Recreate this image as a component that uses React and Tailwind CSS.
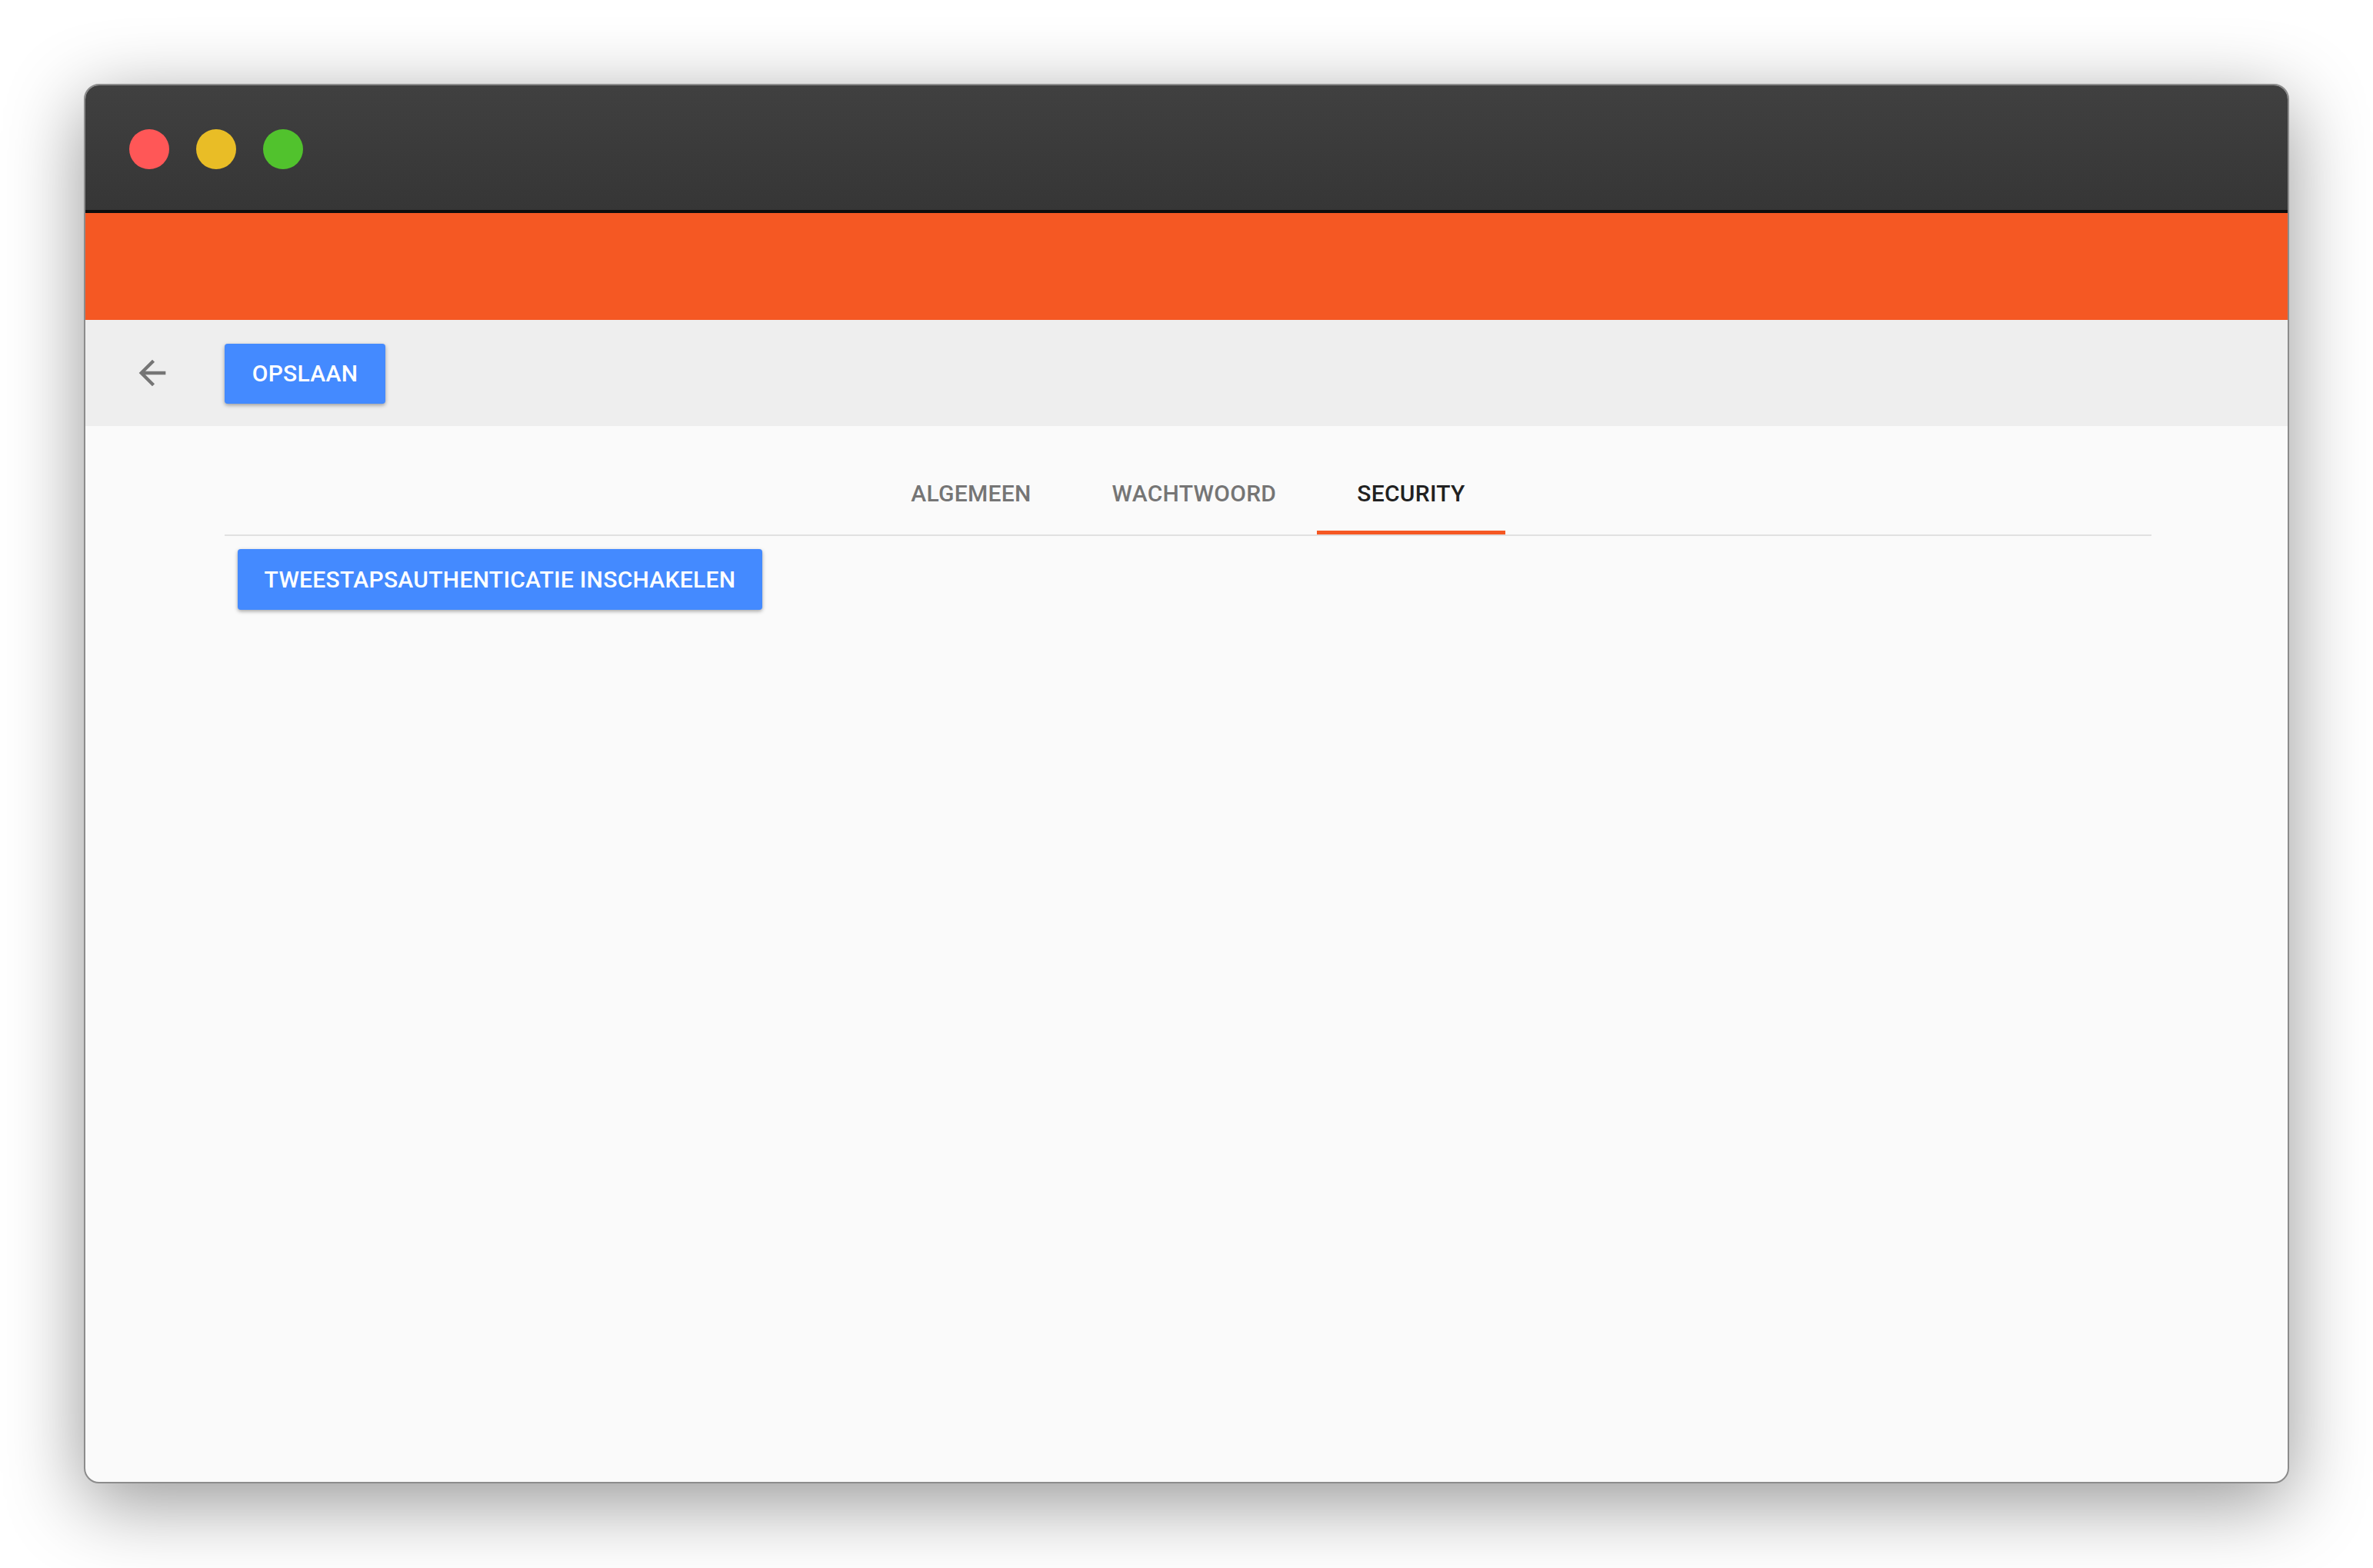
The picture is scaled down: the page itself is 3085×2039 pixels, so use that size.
export default function App() {
  const font = "font-['Roboto',sans-serif] font-medium text-[30px] leading-[34px] tracking-[0.3px]";
  return (
    <div className="w-[3085px] h-[2039px] bg-white overflow-hidden pt-[109px] pl-[109px]">
      <div className="w-[2867px] h-[1820px] rounded-[20px] border-2 border-[#8c8c8c] bg-[#fafafa] overflow-hidden flex flex-col shadow-[0_24px_100px_rgba(0,0,0,0.42)]">
        <div className="h-[166px] shrink-0 bg-linear-to-b from-[#404040] to-[#363636] border-b-[4px] border-[#0d0d0d] flex items-center pl-[57px] gap-[35px] pt-[3px]">
          <div className="w-[52px] h-[52px] rounded-full bg-[#ff5757]" />
          <div className="w-[52px] h-[52px] rounded-full bg-[#e9bd26]" />
          <div className="w-[52px] h-[52px] rounded-full bg-[#51c22d]" />
        </div>
        <div className="h-[139px] shrink-0 bg-[#f55823]" />
        <div className="h-[138px] shrink-0 bg-[#eeeeee] flex items-center pl-[61px]">
          <svg viewBox="0 0 24 24" className="w-[52px] h-[52px] fill-[#757575]">
            <path d="M20 11H7.83l5.59-5.59L12 4l-8 8 8 8 1.41-1.41L7.83 13H20v-2z" />
          </svg>
          <button className={`${font} ml-[68px] mt-[2px] h-[78px] w-[209px] rounded-[4px] bg-[#448aff] text-white shadow-[0_2px_5px_rgba(0,0,0,0.35)]`}>
            OPSLAAN
          </button>
        </div>
        <div className="flex-1 pl-[181px] pr-[177px]">
          <div className="border-b-2 border-[#e0e0e0] h-[143px] flex justify-center items-end">
            <div className={`${font} flex`}>
              <div className="h-[88px] px-[52.5px] pb-[13px] flex items-center text-[#757575] border-b-[5px] border-transparent">ALGEMEEN</div>
              <div className="h-[88px] px-[52.5px] pb-[13px] flex items-center text-[#757575] border-b-[5px] border-transparent">WACHTWOORD</div>
              <div className="h-[88px] px-[52.5px] pb-[13px] flex items-center text-[#212121] border-b-[5px] border-[#f55823]">SECURITY</div>
            </div>
          </div>
          <button className={`${font} mt-[17px] ml-[17px] h-[79px] w-[682px] rounded-[4px] bg-[#448aff] text-white shadow-[0_2px_5px_rgba(0,0,0,0.35)]`}>
            TWEESTAPSAUTHENTICATIE INSCHAKELEN
          </button>
        </div>
      </div>
    </div>
  );
}
